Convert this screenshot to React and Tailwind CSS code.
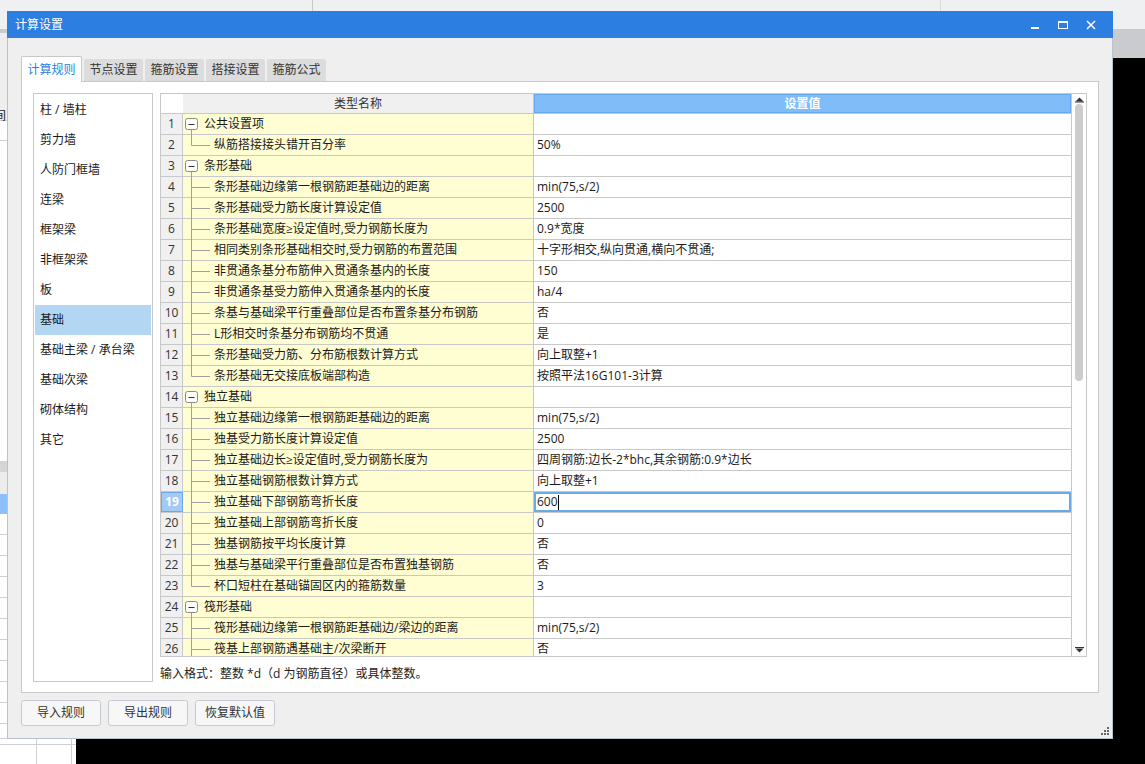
import { useState } from "react";

const FONT = { fontFamily: '"Open Sans", "Noto Sans CJK SC", sans-serif' };

const sideItems = [
  "柱 / 墙柱",
  "剪力墙",
  "人防门框墙",
  "连梁",
  "框架梁",
  "非框架梁",
  "板",
  "基础",
  "基础主梁 / 承台梁",
  "基础次梁",
  "砌体结构",
  "其它",
];

const tabs = ["计算规则", "节点设置", "箍筋设置", "搭接设置", "箍筋公式"];

// g = group row, last = last child of a group
const rows = [
  { g: true, name: "公共设置项", v: "" },
  { name: "纵筋搭接接头错开百分率", v: "50%", last: true },
  { g: true, name: "条形基础", v: "" },
  { name: "条形基础边缘第一根钢筋距基础边的距离", v: "min(75,s/2)" },
  { name: "条形基础受力筋长度计算设定值", v: "2500" },
  { name: "条形基础宽度≥设定值时,受力钢筋长度为", v: "0.9*宽度" },
  { name: "相同类别条形基础相交时,受力钢筋的布置范围", v: "十字形相交,纵向贯通,横向不贯通;" },
  { name: "非贯通条基分布筋伸入贯通条基内的长度", v: "150" },
  { name: "非贯通条基受力筋伸入贯通条基内的长度", v: "ha/4" },
  { name: "条基与基础梁平行重叠部位是否布置条基分布钢筋", v: "否" },
  { name: "L形相交时条基分布钢筋均不贯通", v: "是" },
  { name: "条形基础受力筋、分布筋根数计算方式", v: "向上取整+1" },
  { name: "条形基础无交接底板端部构造", v: "按照平法16G101-3计算", last: true },
  { g: true, name: "独立基础", v: "" },
  { name: "独立基础边缘第一根钢筋距基础边的距离", v: "min(75,s/2)" },
  { name: "独基受力筋长度计算设定值", v: "2500" },
  { name: "独立基础边长≥设定值时,受力钢筋长度为", v: "四周钢筋:边长-2*bhc,其余钢筋:0.9*边长" },
  { name: "独立基础钢筋根数计算方式", v: "向上取整+1" },
  { name: "独立基础下部钢筋弯折长度", v: "600" },
  { name: "独立基础上部钢筋弯折长度", v: "0" },
  { name: "独基钢筋按平均长度计算", v: "否" },
  { name: "独基与基础梁平行重叠部位是否布置独基钢筋", v: "否" },
  { name: "杯口短柱在基础锚固区内的箍筋数量", v: "3", last: true },
  { g: true, name: "筏形基础", v: "" },
  { name: "筏形基础边缘第一根钢筋距基础边/梁边的距离", v: "min(75,s/2)" },
  { name: "筏基上部钢筋遇基础主/次梁断开", v: "否" },
];

function TreeGlyph({ group, last }) {
  return (
    <svg width="30" height="21" className="absolute left-0 top-0" viewBox="0 0 30 21">
      {group ? (
        <>
          <line x1="8.5" y1="16" x2="8.5" y2="21" stroke="#a0a0a0" />
          <rect x="2.5" y="4.5" width="12" height="11" rx="2" fill="#fdfdfd" stroke="#8a8a8a" />
          <line x1="5.5" y1="10.5" x2="11.5" y2="10.5" stroke="#333" />
        </>
      ) : (
        <>
          <line x1="8.5" y1="0" x2="8.5" y2={last ? 10.5 : 21} stroke="#a0a0a0" />
          <line x1="8.5" y1="10.5" x2="27" y2="10.5" stroke="#a0a0a0" />
        </>
      )}
    </svg>
  );
}

function Row({ row, idx }) {
  const sel = idx === 19;
  return (
    <div className="flex h-[21px] shrink-0 border-b border-[#c8c8c8]">
      <div
        className={
          sel
            ? "w-[22px] shrink-0 flex items-center justify-center bg-[#a3cbf2] text-white font-bold shadow-[inset_0_0_0_1px_#6aa8ee]"
            : "w-[22px] shrink-0 flex items-center justify-center bg-[#f0f0f0] text-[#333] border-r border-[#c8c8c8]"
        }
      >
        {idx}
      </div>
      <div
        className={
          "relative w-[351px] shrink-0 flex items-center bg-[#fffdd2] border-r border-[#c8c8c8] whitespace-nowrap " +
          (row.g ? "pl-[21px]" : "pl-[31px]")
        }
      >
        <TreeGlyph group={row.g} last={row.last} />
        <span className="relative">{row.name}</span>
      </div>
      <div
        className={
          sel
            ? "flex-1 flex items-center pl-[3px] bg-white shadow-[inset_0_0_0_2px_#6aa8e8]"
            : "flex-1 flex items-center pl-[3px] bg-white whitespace-nowrap"
        }
      >
        {row.v}
        {sel && <span className="inline-block w-px h-[15px] bg-black" />}
      </div>
    </div>
  );
}

export default function App() {
  const [active, setActive] = useState(7);
  const [tab, setTab] = useState(0);

  return (
    <div
      className="relative w-[1145px] h-[764px] overflow-hidden bg-black text-[12px] text-[#1a1a1a]"
      style={FONT}
    >
      {/* desktop backdrop */}
      <div className="absolute left-0 top-0 w-full h-[29px] bg-[#eef0f1]">
        <div className="absolute left-[312px] top-0 w-px h-[11px] bg-[#c8c8c8]" />
        <div className="absolute left-[940px] top-0 w-px h-[11px] bg-[#d8d8d8]" />
      </div>
      <div className="absolute right-0 top-[29px] w-[33px] h-[29px] bg-[#c9cbcf]" />
      <div className="absolute left-0 top-[29px] w-[76px] h-[735px] bg-white">
        <div className="h-[4px] bg-[#c9cbcf]" />
        <div className="h-[88px] bg-[#eeeeee] border-b border-[#c8c8c8] pt-[74px] text-[12px] -ml-[6px]">间</div>
        <div className="h-[20px] border-b border-[#d0d0d0]" />
        <div className="h-[320px]" />
        <div className="h-[11px] bg-[#d5d5d5]" />
        <div className="h-[22px] bg-[#ececec]" />
        <div className="h-[20px] bg-[#8ebff6]" />
        {Array.from({ length: 11 }).map((_, i) => (
          <div key={i} className="h-[21px] border-b border-[#d0d0d0]" />
        ))}
        <div className="absolute left-[36px] top-[705px] w-px h-[30px] bg-[#d0d0d0]" />
        <div className="absolute left-[71px] top-[705px] w-px h-[30px] bg-[#d0d0d0]" />
        <div className="absolute left-[0px] top-[709px] w-[58px] h-px bg-[#d0d0d0]" />
      </div>
      <div className="absolute left-[76px] top-[738px] w-[1069px] h-[26px] bg-black" />

      {/* dialog window */}
      <div className="absolute left-[7px] top-[11px] w-[1106px] h-[728px] flex flex-col bg-[#efefef] border-x border-b border-[#b9c3cf]">
        <div className="h-[27px] shrink-0 -mx-px bg-[#2c7fe0] flex items-center text-white text-[12px]">
          <span className="pl-[8px] flex-1">计算设置</span>
          <div className="flex items-center h-full">
            <div className="w-[28px] h-full flex items-center justify-center">
              <span className="block w-[8px] h-[2px] bg-white mt-[6px]" />
            </div>
            <div className="w-[28px] h-full flex items-center justify-center">
              <span className="block w-[10px] h-[8px] border border-white border-t-2" />
            </div>
            <div className="w-[28px] h-full flex items-center justify-center">
              <svg width="10" height="10" viewBox="0 0 10 10">
                <path d="M1 1L9 9M9 1L1 9" stroke="white" strokeWidth="1.5" />
              </svg>
            </div>
            <div className="w-[8px]" />
          </div>
        </div>

        {/* tabs */}
        <div className="flex items-end gap-[2px] pl-[13px] mt-[17px] h-[26px] relative z-10">
          {tabs.map((t, i) =>
            i === tab ? (
              <button
                key={t}
                onClick={() => setTab(i)}
                className="h-[26px] w-[61px] bg-white border border-b-0 border-[#c8c8c8] rounded-t-[2px] text-[#2c7fe0] -mb-px"
              >
                {t}
              </button>
            ) : (
              <button
                key={t}
                onClick={() => setTab(i)}
                className="h-[22px] w-[59px] bg-[#dcdcdc] rounded-t-[2px] text-[#333]"
              >
                {t}
              </button>
            )
          )}
        </div>

        {/* panel */}
        <div className="ml-[13px] w-[1078px] h-[612px] shrink-0 bg-white border border-[#c8c8c8] flex gap-[7px] pl-[11px] pt-[11px]">
          <div className="w-[120px] h-[589px] shrink-0 border border-[#c8c8c8] pt-px px-px">
            {sideItems.map((s, i) => (
              <div
                key={s}
                onClick={() => setActive(i)}
                className={
                  "h-[30px] flex items-center pl-[5px] " + (i === active ? "bg-[#b3d7f3]" : "")
                }
              >
                {s}
              </div>
            ))}
          </div>

          <div className="flex flex-col">
            <div className="w-[927px] h-[564px] border border-[#c8c8c8] flex overflow-hidden">
              <div className="flex-1 flex flex-col overflow-hidden">
                <div className="flex h-[20px] shrink-0 border-b border-[#c8c8c8]">
                  <div className="w-[22px] shrink-0 bg-white" />
                  <div className="w-[351px] shrink-0 bg-[#f0f0f0] border-r border-[#c8c8c8] flex items-center justify-center text-[#333]">
                    类型名称
                  </div>
                  <div className="flex-1 bg-[#80bcf8] border border-[#6aa8ee] flex items-center justify-center text-white font-bold">
                    设置值
                  </div>
                </div>
                {rows.map((r, i) => (
                  <Row key={i} row={r} idx={i + 1} />
                ))}
              </div>
              <div className="w-[15px] shrink-0 border-l border-[#c8c8c8] bg-white flex flex-col items-center pt-[3px] pb-[3px]">
                <svg width="9" height="6" viewBox="0 0 9 6">
                  <path d="M4.5 0.5L8.5 4.5H0.5Z" fill="#333" />
                  <rect x="0" y="4.5" width="9" height="1" fill="#333" />
                </svg>
                <div className="w-[8px] h-[277px] mt-[1px] rounded-[4px] bg-[#cdcdcd]" />
                <div className="flex-1" />
                <svg width="9" height="6" viewBox="0 0 9 6">
                  <rect x="0" y="0" width="9" height="1" fill="#333" />
                  <path d="M0.5 1.5H8.5L4.5 5.5Z" fill="#333" />
                </svg>
              </div>
            </div>
            <div className="mt-[8px] text-[12px] text-[#222]">输入格式：整数 *d（d 为钢筋直径）或具体整数。</div>
          </div>
        </div>

        {/* buttons */}
        <div className="flex gap-[7px] pl-[13px] mt-[7px] relative">
          {["导入规则", "导出规则", "恢复默认值"].map((b) => (
            <button
              key={b}
              className="w-[80px] h-[26px] bg-[#f7f7f7] border border-[#c6cad2] rounded-[3px] text-[#333]"
            >
              {b}
            </button>
          ))}
        </div>
        <div className="flex-1" />
        <div className="flex justify-end pr-[3px] pb-[3px]">
          <svg width="8" height="8" viewBox="0 0 8 8">
            <rect x="6" y="0" width="2" height="2" fill="#666" />
            <rect x="3" y="3" width="2" height="2" fill="#666" />
            <rect x="6" y="3" width="2" height="2" fill="#666" />
            <rect x="0" y="6" width="2" height="2" fill="#666" />
            <rect x="3" y="6" width="2" height="2" fill="#666" />
            <rect x="6" y="6" width="2" height="2" fill="#666" />
          </svg>
        </div>
      </div>
    </div>
  );
}
